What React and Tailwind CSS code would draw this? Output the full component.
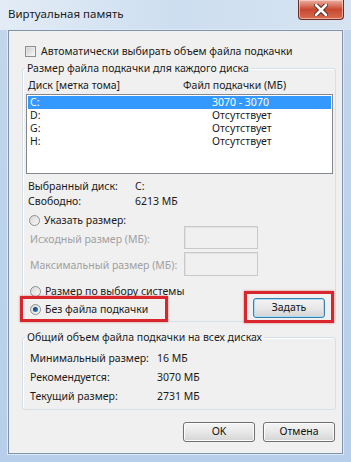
import React from "react";

const F = "font-['Noto_Sans',_sans-serif]";

function Checkbox() {
  return (
    <div className="w-[11px] h-[11px] border border-[#8e8f8f] bg-gradient-to-br from-[#dcdcdc] to-[#f8f8f8] p-[1px]">
      <div className="w-full h-full bg-gradient-to-br from-[#d0d0d0] to-[#f5f5f5]" />
    </div>
  );
}

function Radio({ checked }) {
  return (
    <div className="w-[11px] h-[11px] shrink-0 rounded-full border border-[#8e8f8f] bg-gradient-to-br from-[#d6d6d6] to-[#fafafa] flex items-center justify-center">
      {checked && (
        <div className="w-[5px] h-[5px] rounded-full bg-gradient-to-br from-[#0b2d5c] to-[#3e8fd6]" />
      )}
    </div>
  );
}

function WinButton({ children, def }) {
  return (
    <div
      className={
        "h-[20px] w-[72px] rounded-[3px] border flex items-center justify-center text-[10.5px] text-[#111] bg-gradient-to-b from-[#f4f4f4] via-[#e8e8e8] to-[#d4d4d4] " +
        (def ? "border-[#3c7fb1] shadow-[inset_0_0_0_1px_#a8dcf6]" : "border-[#707070] shadow-[inset_0_0_0_1px_#fcfcfc]")
      }
    >
      {children}
    </div>
  );
}

export default function App() {
  return (
    <div
      className={
        "w-[351px] h-[462px] overflow-hidden bg-gradient-to-b from-[#c4d6ea] via-[#bcd3ec] to-[#b7cfea] flex flex-col " +
        F
      }
    >
      {/* title bar */}
      <div className="h-[30px] flex items-start bg-gradient-to-r from-[#e3ecf6] via-[#cddef0] to-[#d6e3f1]">
        <div className="pl-[8px] pt-[6px] text-[11.5px] leading-[16px] text-[#1b1b1b]">
          Виртуальная память
        </div>
        <div className="ml-auto mr-[7px] w-[46px] h-[20px] rounded-b-[4px] border border-t-0 border-[#6b2a26] bg-gradient-to-b from-[#eab0a3] via-[#c8472f] to-[#d76b4e] flex items-center justify-center shadow-[inset_0_0_0_1px_rgba(255,220,210,0.6)]">
          <svg width="14" height="12" viewBox="0 0 14 12">
            <path d="M2 1 L12 11 M12 1 L2 11" stroke="#5a1f1a" strokeWidth="4.5" strokeLinecap="round" />
            <path d="M2 1 L12 11 M12 1 L2 11" stroke="#ffffff" strokeWidth="2.6" strokeLinecap="round" />
          </svg>
        </div>
      </div>

      {/* client area */}
      <div className="mx-[8px] h-[424px] border border-[#7f93ab] bg-[#f0f0f0] text-[10.5px] text-[#1a1a1a] flex flex-col shadow-[0_0_0_1px_#dde9f5] whitespace-nowrap">
        {/* checkbox row */}
        <div className="mt-[14px] ml-[16px] h-[13px] flex items-center gap-[5px] leading-[13px]">
          <Checkbox />
          <span>Автоматически выбирать объем файла подкачки</span>
        </div>

        {/* group 1 */}
        <fieldset className="mt-[4px] ml-[13px] w-[314px] border border-[#d5dfe5] rounded-[3px] pl-[3px] pr-[2px] pb-[5px] shadow-[inset_1px_1px_0_#fff]">
          <legend className="ml-[-1px] px-[2px] leading-[13px]">
            Размер файла подкачки для каждого диска
          </legend>
          <div className="mt-[4px] h-[13px] leading-[13px] flex">
            <span className="ml-[2px] w-[155px] shrink-0">Диск [метка тома]</span>
            <span>Файл подкачки (МБ)</span>
          </div>
          <div className="mt-[2px] h-[80px] w-[307px] border border-[#828790] bg-white p-[1px]">
            {[
              ["C:", "3070 - 3070", true],
              ["D:", "Отсутствует"],
              ["G:", "Отсутствует"],
              ["H:", "Отсутствует"],
            ].map(([d, v, sel]) => (
              <div
                key={d}
                className={
                  "h-[13px] leading-[13px] flex items-center " +
                  (sel ? "bg-[#3399ff] text-white" : "text-[#1a1a1a]")
                }
              >
                <span className="pl-[2px] w-[184px] shrink-0">{d}</span>
                <span>{v}</span>
              </div>
            ))}
          </div>
          <div className="mt-[5px] h-[15px] leading-[15px] flex">
            <span className="ml-[2px] w-[107px] shrink-0">Выбранный диск:</span>
            <span>C:</span>
          </div>
          <div className="h-[15px] leading-[15px] flex">
            <span className="ml-[2px] w-[107px] shrink-0">Свободно:</span>
            <span>6213 МБ</span>
          </div>
          <div className="mt-[5px] h-[12px] leading-[12px] flex items-center gap-[4px] ml-[3px]">
            <Radio />
            <span>Указать размер:</span>
          </div>
          <div className="h-[23px] flex items-center">
            <span className="ml-[4px] w-[154px] shrink-0 pt-[4px] text-[#a0a0a0]">Исходный размер (МБ):</span>
            <div className="w-[74px] h-[23px] border border-[#c9c9c9] bg-[#f0f0f0] shadow-[inset_1px_1px_0_#e2e2e2]" />
          </div>
          <div className="mt-[3px] h-[24px] flex items-center">
            <span className="ml-[4px] w-[154px] shrink-0 pt-[4px] text-[#a0a0a0]">Максимальный размер (МБ):</span>
            <div className="w-[74px] h-[24px] border border-[#c9c9c9] bg-[#f0f0f0] shadow-[inset_1px_1px_0_#e2e2e2]" />
          </div>
          <div className="mt-[8px] flex items-end">
            <div className="flex flex-col">
              <div className="h-[14px] leading-[14px] flex items-center gap-[4px] ml-[4px]">
                <Radio />
                <span>Размер по выбору системы</span>
              </div>
              <div className="relative mt-[4px] h-[14px] leading-[14px] flex items-center gap-[4px] ml-[4px]">
                <Radio checked />
                <span>Без файла подкачки</span>
                <div className="absolute left-[-10px] top-[-6px] w-[148px] h-[26px] border-[3px] border-[#d9262c] shadow-[0_0_2px_rgba(200,30,30,0.6)]" />
              </div>
            </div>
            <div className="relative ml-auto mr-[8px] mb-[-2px]">
              <WinButton def>Задать</WinButton>
              <div className="absolute left-[-9px] top-[-7px] w-[90px] h-[32px] border-[3px] border-[#d9262c] shadow-[0_0_2px_rgba(200,30,30,0.6)]" />
            </div>
          </div>
        </fieldset>

        {/* group 2 */}
        <fieldset className="mt-[9px] ml-[13px] w-[314px] border border-[#d5dfe5] rounded-[3px] pl-[3px] pb-[6px] shadow-[inset_1px_1px_0_#fff]">
          <legend className="ml-[-1px] px-[2px] leading-[13px]">
            Общий объем файла подкачки на всех дисках
          </legend>
          <div className="h-[2px]" />
          {[
            ["Минимальный размер:", "16 МБ"],
            ["Рекомендуется:", "3070 МБ"],
            ["Текущий размер:", "2731 МБ"],
          ].map(([l, v]) => (
            <div key={l} className="mt-[5px] h-[14px] leading-[14px] flex">
              <span className="ml-[4px] w-[127px] shrink-0">{l}</span>
              <span>{v}</span>
            </div>
          ))}
        </fieldset>

        {/* buttons */}
        <div className="mt-[12px] mr-[7px] flex justify-end gap-[8px]">
          <WinButton>OK</WinButton>
          <WinButton>Отмена</WinButton>
        </div>
      </div>
    </div>
  );
}
